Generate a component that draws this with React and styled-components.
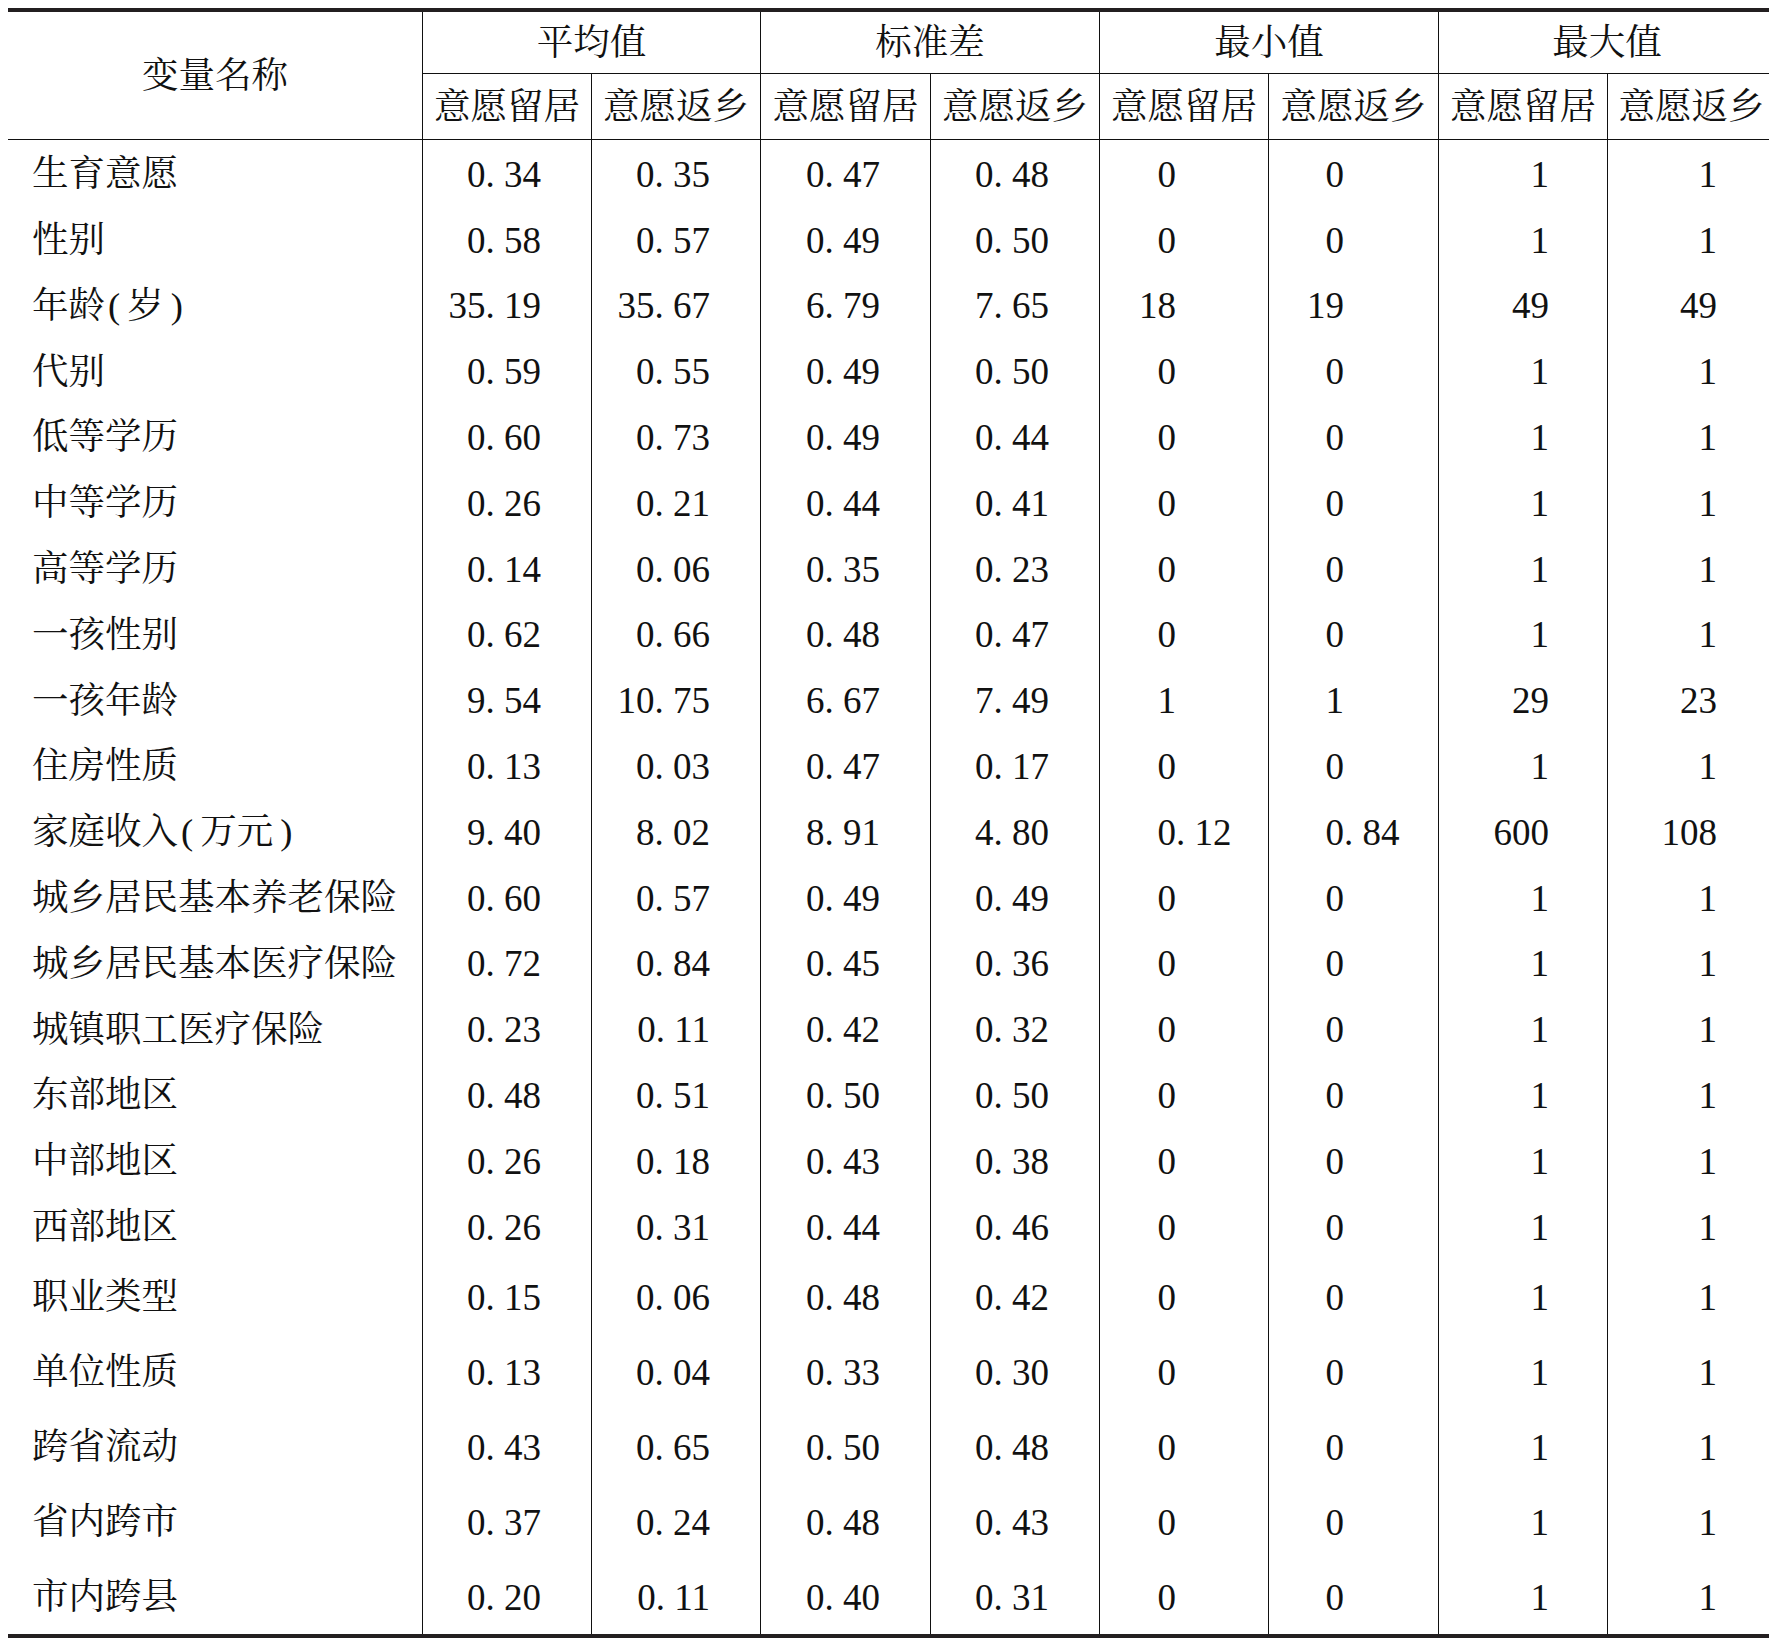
import React from "react";
import styled, { createGlobalStyle } from "styled-components";

const Global = createGlobalStyle`
  html, body { background: #ffffff; }
  body {
    margin: 8px;
    font-family: "Liberation Serif", "Noto Serif CJK SC", "Noto Sans CJK SC", serif;
    color: #111;
  }
`;

const Table = styled.table`
  width: 1767px;
  table-layout: fixed;
  border-collapse: separate;
  border-spacing: 0;
  border-top: 4px solid #231f20;
  border-bottom: 4px solid #231f20;
  font-size: 36.5px;
  line-height: 1;
`;

const HeadRow = styled.tr`
  height: ${(p) => p.$h}px;
`;

const Row = styled.tr`
  height: ${(p) => p.$h}px;
`;

const HeadCell = styled.th`
  font-weight: 400;
  text-align: center;
  vertical-align: middle;
  padding: 2px 0 0 0;
  white-space: nowrap;
  border-left: ${(p) => (p.$first ? "none" : "1px solid #111")};
  border-bottom: ${(p) => (p.$rule ? "1.5px solid #111" : "none")};
`;

const LabelCell = styled.td`
  text-align: left;
  vertical-align: middle;
  padding: 3px 0 0 24px;
  white-space: nowrap;
`;

const Paren = styled.span`
  display: inline-block;
  padding: 0 ${(p) => (p.$open ? "7px 0 3px" : "3px 0 7px")};
`;

const NumCell = styled.td`
  font-size: 37px;
  text-align: ${(p) => (p.$align === "decimal" ? "left" : "right")};
  padding: 3px ${(p) => (p.$align === "decimal" ? 0 : p.$pad)}px 0 0;
  vertical-align: middle;
  white-space: nowrap;
  border-left: 1px solid #111;
`;

const IntPart = styled.span`
  display: inline-block;
  width: ${(p) => p.$w}px;
  text-align: right;
`;

const groups = ["平均值", "标准差", "最小值", "最大值"];
const subs = ["意愿留居", "意愿返乡"];
const widths = [414, 169, 169, 170, 169, 169, 170, 169, 168];

const rows = [
  ["生育意愿", "0. 34", "0. 35", "0. 47", "0. 48", "0", "0", "1", "1"],
  ["性别", "0. 58", "0. 57", "0. 49", "0. 50", "0", "0", "1", "1"],
  ["年龄(岁)", "35. 19", "35. 67", "6. 79", "7. 65", "18", "19", "49", "49"],
  ["代别", "0. 59", "0. 55", "0. 49", "0. 50", "0", "0", "1", "1"],
  ["低等学历", "0. 60", "0. 73", "0. 49", "0. 44", "0", "0", "1", "1"],
  ["中等学历", "0. 26", "0. 21", "0. 44", "0. 41", "0", "0", "1", "1"],
  ["高等学历", "0. 14", "0. 06", "0. 35", "0. 23", "0", "0", "1", "1"],
  ["一孩性别", "0. 62", "0. 66", "0. 48", "0. 47", "0", "0", "1", "1"],
  ["一孩年龄", "9. 54", "10. 75", "6. 67", "7. 49", "1", "1", "29", "23"],
  ["住房性质", "0. 13", "0. 03", "0. 47", "0. 17", "0", "0", "1", "1"],
  ["家庭收入(万元)", "9. 40", "8. 02", "8. 91", "4. 80", "0. 12", "0. 84", "600", "108"],
  ["城乡居民基本养老保险", "0. 60", "0. 57", "0. 49", "0. 49", "0", "0", "1", "1"],
  ["城乡居民基本医疗保险", "0. 72", "0. 84", "0. 45", "0. 36", "0", "0", "1", "1"],
  ["城镇职工医疗保险", "0. 23", "0. 11", "0. 42", "0. 32", "0", "0", "1", "1"],
  ["东部地区", "0. 48", "0. 51", "0. 50", "0. 50", "0", "0", "1", "1"],
  ["中部地区", "0. 26", "0. 18", "0. 43", "0. 38", "0", "0", "1", "1"],
  ["西部地区", "0. 26", "0. 31", "0. 44", "0. 46", "0", "0", "1", "1"],
  ["职业类型", "0. 15", "0. 06", "0. 48", "0. 42", "0", "0", "1", "1"],
  ["单位性质", "0. 13", "0. 04", "0. 33", "0. 30", "0", "0", "1", "1"],
  ["跨省流动", "0. 43", "0. 65", "0. 50", "0. 48", "0", "0", "1", "1"],
  ["省内跨市", "0. 37", "0. 24", "0. 48", "0. 43", "0", "0", "1", "1"],
  ["市内跨县", "0. 20", "0. 11", "0. 40", "0. 31", "0", "0", "1", "1"],
];

function Label({ text }) {
  const m = text.match(/^(.*)\((.*)\)$/);
  if (!m) return <LabelCell>{text}</LabelCell>;
  return (
    <LabelCell>
      {m[1]}
      <Paren $open>(</Paren>
      {m[2]}
      <Paren>)</Paren>
    </LabelCell>
  );
}

function Value({ v, col }) {
  if (col === 4 || col === 5) {
    const dot = v.indexOf(".");
    const intPart = dot >= 0 ? v.slice(0, dot) : v;
    const frac = dot >= 0 ? v.slice(dot) : "";
    return (
      <NumCell $align="decimal">
        <IntPart $w={col === 4 ? 76 : 75}>{intPart}</IntPart>
        {frac}
      </NumCell>
    );
  }
  const pad = col >= 6 ? 58 : 50;
  return <NumCell $pad={pad}>{v}</NumCell>;
}

export default function App() {
  return (
    <>
      <Global />
      <Table>
        <colgroup>
          {widths.map((w, i) => (
            <col key={i} style={{ width: w }} />
          ))}
        </colgroup>
        <thead>
          <HeadRow $h={62}>
            <HeadCell rowSpan={2} $first $rule>
              变量名称
            </HeadCell>
            {groups.map((g) => (
              <HeadCell key={g} colSpan={2} $rule>
                {g}
              </HeadCell>
            ))}
          </HeadRow>
          <HeadRow $h={66}>
            {groups.map((g) =>
              subs.map((s) => (
                <HeadCell key={g + s} $rule>
                  {s}
                </HeadCell>
              ))
            )}
          </HeadRow>
        </thead>
        <tbody>
          {rows.map((r, i) => (
            <Row key={r[0]} $h={i < 17 ? 65.8 : 75}>
              <Label text={r[0]} />
              {r.slice(1).map((v, j) => (
                <Value key={j} v={v} col={j} />
              ))}
            </Row>
          ))}
        </tbody>
      </Table>
    </>
  );
}
